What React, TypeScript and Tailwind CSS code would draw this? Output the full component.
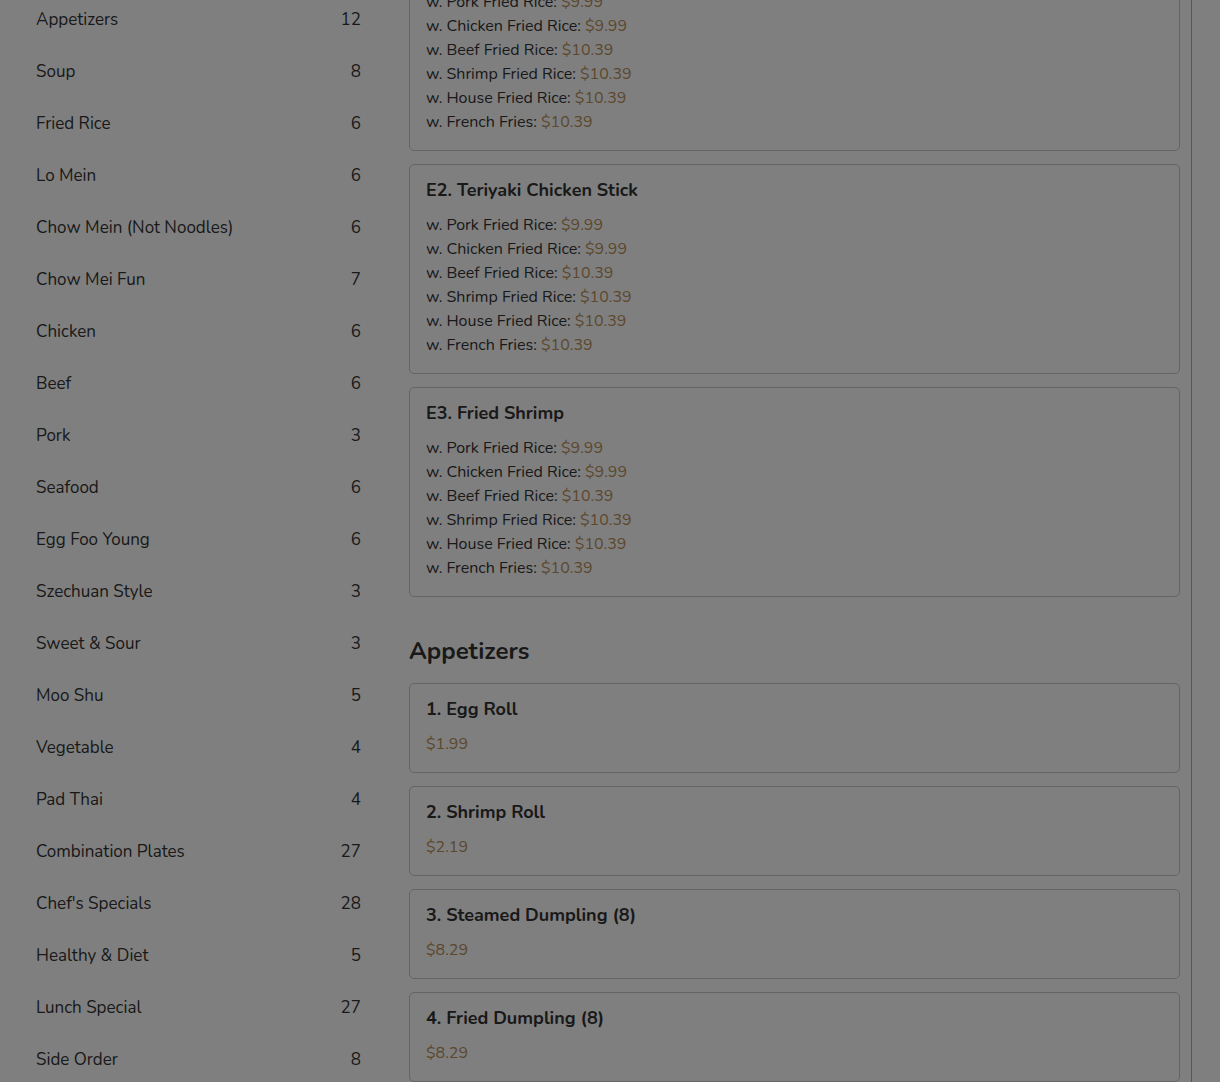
import React from 'react';

type Category = { name: string; count: number };

const categories: Category[] = [
  { name: 'Appetizers', count: 12 },
  { name: 'Soup', count: 8 },
  { name: 'Fried Rice', count: 6 },
  { name: 'Lo Mein', count: 6 },
  { name: 'Chow Mein (Not Noodles)', count: 6 },
  { name: 'Chow Mei Fun', count: 7 },
  { name: 'Chicken', count: 6 },
  { name: 'Beef', count: 6 },
  { name: 'Pork', count: 3 },
  { name: 'Seafood', count: 6 },
  { name: 'Egg Foo Young', count: 6 },
  { name: 'Szechuan Style', count: 3 },
  { name: 'Sweet & Sour', count: 3 },
  { name: 'Moo Shu', count: 5 },
  { name: 'Vegetable', count: 4 },
  { name: 'Pad Thai', count: 4 },
  { name: 'Combination Plates', count: 27 },
  { name: "Chef's Specials", count: 28 },
  { name: 'Healthy & Diet', count: 5 },
  { name: 'Lunch Special', count: 27 },
  { name: 'Side Order', count: 8 },
];

const sides: [string, string][] = [
  ['w. Pork Fried Rice:', '$9.99'],
  ['w. Chicken Fried Rice:', '$9.99'],
  ['w. Beef Fried Rice:', '$10.39'],
  ['w. Shrimp Fried Rice:', '$10.39'],
  ['w. House Fried Rice:', '$10.39'],
  ['w. French Fries:', '$10.39'],
];

const kidsItems = ['E1. Chicken Nuggets', 'E2. Teriyaki Chicken Stick', 'E3. Fried Shrimp'];

const appetizers = [
  { name: '1. Egg Roll', price: '$1.99' },
  { name: '2. Shrimp Roll', price: '$2.19' },
  { name: '3. Steamed Dumpling (8)', price: '$8.29' },
  { name: '4. Fried Dumpling (8)', price: '$8.29' },
];

const font = { fontFamily: 'Nunito, Lato, "Noto Sans", sans-serif' };

function OptionCard({ title }: { title: string }) {
  return (
    <div className="rounded-[5px] border border-[#c8c8c8] px-4 pt-3 pb-4">
      <h3 className="text-[18px] leading-[26px] font-bold text-[#333]">{title}</h3>
      <div className="mt-2.5 flex flex-col">
        {sides.map(([label, price]) => (
          <p key={label} className="text-[16px] leading-6 text-[#333]">
            {label} <span className="text-[#b8905a]">{price}</span>
          </p>
        ))}
      </div>
    </div>
  );
}

function ItemCard({ name, price }: { name: string; price: string }) {
  return (
    <div className="rounded-[5px] border border-[#c8c8c8] px-4 pt-3 pb-4">
      <h3 className="text-[18px] leading-[26px] font-bold text-[#333]">{name}</h3>
      <p className="mt-2.5 text-[16px] leading-6 text-[#b8905a]">{price}</p>
    </div>
  );
}

export default function App() {
  return (
    <div className="relative min-h-screen overflow-hidden bg-white" style={font}>
      <div className="flex items-start">
        <aside className="w-[397px] shrink-0 px-9 -mt-[6px]">
          <ul className="flex flex-col">
            {categories.map((c) => (
              <li key={c.name} className="flex items-center justify-between py-[14px] text-[17px] leading-6 text-[#333]">
                <span>{c.name}</span>
                <span>{c.count}</span>
              </li>
            ))}
          </ul>
        </aside>

        <main className="w-[795px] shrink-0 border-r border-[#b0b0b0] pl-3 pr-[11px] -mt-[59px]">
          <div className="flex flex-col gap-[13px]">
            {kidsItems.map((t) => (
              <OptionCard key={t} title={t} />
            ))}
          </div>

          <section className="mt-[38px]">
            <h2 className="text-[24px] leading-8 font-bold text-[#333]">Appetizers</h2>
            <div className="mt-4 flex flex-col gap-[13px]">
              {appetizers.map((a) => (
                <ItemCard key={a.name} name={a.name} price={a.price} />
              ))}
            </div>
          </section>
        </main>
      </div>

      <div className="fixed inset-0 bg-black/50" />
    </div>
  );
}
